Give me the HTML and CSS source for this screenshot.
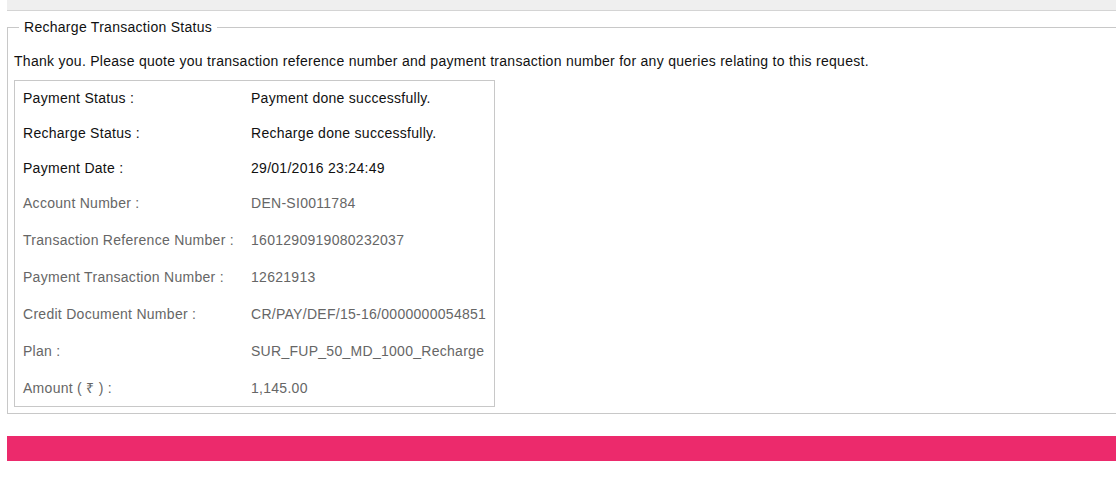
FILE: index.html
```html
<!DOCTYPE html>
<html>
<head>
<meta charset="utf-8">
<link rel="stylesheet" href="styles.css">
</head>
<body>
<div class="page">
  <div class="topbar"></div>
  <fieldset class="status">
    <legend class="status-title">Recharge Transaction Status</legend>
    <p class="intro">Thank you. Please quote you transaction reference number and payment transaction number for any queries relating to this request.</p>
    <div class="details">
      <div class="row strong r1"><span class="label">Payment Status :</span><span class="value">Payment done successfully.</span></div>
      <div class="row strong"><span class="label">Recharge Status :</span><span class="value">Recharge done successfully.</span></div>
      <div class="row strong"><span class="label">Payment Date :</span><span class="value">29/01/2016 23:24:49</span></div>
      <div class="row muted r4"><span class="label">Account Number :</span><span class="value">DEN-SI0011784</span></div>
      <div class="row muted"><span class="label">Transaction Reference Number :</span><span class="value">1601290919080232037</span></div>
      <div class="row muted"><span class="label">Payment Transaction Number :</span><span class="value">12621913</span></div>
      <div class="row muted"><span class="label">Credit Document Number :</span><span class="value">CR/PAY/DEF/15-16/0000000054851</span></div>
      <div class="row muted"><span class="label">Plan :</span><span class="value">SUR_FUP_50_MD_1000_Recharge</span></div>
      <div class="row muted"><span class="label">Amount ( ₹ ) :</span><span class="value">1,145.00</span></div>
    </div>
  </fieldset>
  <div class="footer-bar"></div>
</div>
</body>
</html>
```

FILE: styles.css
```css
html, body {
  margin: 0;
  padding: 0;
  background: #ffffff;
}
body {
  font-family: "Liberation Sans", Arial, sans-serif;
  font-size: 14px;
  letter-spacing: 0.28px;
  color: #000;
}
.page {
  padding-left: 7px;
}
.topbar {
  height: 10px;
  background: #efefef;
  border-bottom: 1px solid #d4d4d4;
}
.status {
  margin: 8px 0 0 0;
  padding: 0 6px 6px 6px;
  border: 1px solid #c8c8c8;
  border-right: none;
  min-width: 0;
}
.status-title {
  margin-left: 5px;
  padding: 0 5px;
  font-size: 14px;
  line-height: 16px;
  color: #111;
}
.intro {
  margin: 18px 0 11px 0;
  line-height: 16px;
  color: #111;
}
.details {
  width: 479px;
  border: 1px solid #c8c8c8;
}
.row {
  display: flex;
  align-items: center;
  height: 35px;
  padding-left: 8px;
  line-height: 16px;
}
.row.r1 {
  height: 34px;
}
.row.muted {
  height: 37px;
  color: #666;
}
.row.muted.r4 {
  height: 36px;
}
.row.strong {
  color: #111;
}
.label {
  width: 228px;
  flex: none;
}
.value {
  white-space: nowrap;
}
.footer-bar {
  margin-top: 22px;
  height: 25px;
  background: #ec2a6c;
}
```
